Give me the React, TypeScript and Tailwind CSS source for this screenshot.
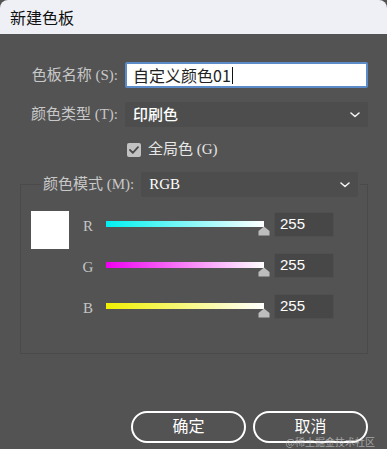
import * as React from "react";

const serif = "font-['Liberation_Serif','Noto_Sans_CJK_SC',serif]";
const sans = "font-['Noto_Sans_CJK_SC','Liberation_Sans',sans-serif]";

const Chevron = () => (
  <svg width="10" height="6" viewBox="0 0 10 6" fill="none">
    <path d="M1 1l4 3.5L9 1" stroke="#f2f2f2" strokeWidth="1.6" strokeLinecap="round" strokeLinejoin="round" />
  </svg>
);

interface SliderRowProps {
  label: string;
  from: string;
  value: number;
}

const SliderRow: React.FC<SliderRowProps> = ({ label, from, value }) => (
  <div className="flex items-center h-[25px]">
    <div className={`w-[12px] text-center text-[15px] text-[#c4c4c4] mt-[4px] ${serif}`}>{label}</div>
    <div className="ml-[12px] w-[158px] relative h-[26px]">
      <div
        className="absolute left-0 right-0 top-[9px] h-[6px]"
        style={{ background: `linear-gradient(to right, ${from}, #ffffff)` }}
      />
      <svg className="absolute right-[-6px] top-[14px]" width="12" height="10" viewBox="0 0 12 10">
        <path d="M6 0.5L11.5 5V9.5H0.5V5Z" fill="#bdbdbd" />
      </svg>
    </div>
    <div className="ml-[10px] w-[60px] h-[25px] bg-[#474747] border border-[#4f4f4f] rounded-[2px] pl-[5px] flex items-center text-[15px] text-white font-['Liberation_Sans',sans-serif]">
      {value}
    </div>
  </div>
);

export default function App() {
  return (
    <div className={`w-[387px] h-[449px] bg-[#535353] flex flex-col relative overflow-hidden ${sans}`}>
      <div className="h-[34px] bg-[#eef0f6] rounded-t-[8px] flex items-center pl-[10px] text-[16px] text-[#111] shrink-0">
        新建色板
      </div>

      <div className="flex flex-col pt-[28px]">
        <div className="flex items-center h-[26px]">
          <div className={`w-[120px] pr-[2px] text-right text-[15px] text-[#c8c8c8] ${serif}`}>色板名称 (S):</div>
          <div className="ml-[5px] w-[243px] h-[26px] bg-white border-2 border-[#5b8bc9] rounded-[2px] flex items-center pl-[6px] text-[16px] text-[#222]">
            自定义颜色01<span className="w-[1px] h-[17px] bg-[#111] ml-[1px]" />
          </div>
        </div>

        <div className="flex items-center h-[25px] mt-[14px]">
          <div className={`w-[120px] pr-[2px] text-right text-[15px] text-[#c8c8c8] ${serif}`}>颜色类型 (T):</div>
          <div className="ml-[5px] w-[243px] h-[25px] bg-[#4d4d4d] rounded-[2px] flex items-center justify-between pl-[8px] pr-[8px] text-[15px] text-white font-medium">
            印刷色
            <Chevron />
          </div>
        </div>

        <div className="flex items-center h-[15px] mt-[15px] ml-[127px]">
          <div className="w-[14px] h-[14px] bg-[#c2c2c2] rounded-[2px] flex items-center justify-center">
            <svg width="10" height="8" viewBox="0 0 10 8" fill="none">
              <path d="M1 4l2.8 2.8L9 1.2" stroke="#4a4a4a" strokeWidth="1.8" strokeLinecap="round" strokeLinejoin="round" />
            </svg>
          </div>
          <span className={`ml-[7px] text-[15px] text-[#e6e6e6] ${serif}`}>全局色 (G)</span>
        </div>

        <fieldset className="mt-[15px] ml-[20px] w-[348px] border border-[#4a4a4a] pl-[10px] pb-[34px]">
          <legend className="ml-[10px] px-[2px]">
            <div className="flex items-center h-[25px]">
              <span className={`text-[15px] text-[#c8c8c8] ${serif}`}>颜色模式 (M):</span>
              <div className={`ml-[7px] w-[217px] h-[25px] bg-[#4d4d4d] rounded-[2px] flex items-center justify-between pl-[8px] pr-[8px] text-[15px] text-white ${serif}`}>
                RGB
                <Chevron />
              </div>
            </div>
          </legend>

          <div className="flex mt-[14px]">
            <div className="w-[38px] h-[38px] bg-white shrink-0" />
            <div className="ml-[13px] flex flex-col gap-[16px] pt-[1px]">
              <SliderRow label="R" from="#00f0f0" value={255} />
              <SliderRow label="G" from="#f000f0" value={255} />
              <SliderRow label="B" from="#f0f000" value={255} />
            </div>
          </div>
        </fieldset>

        <div className="flex justify-end gap-[7px] pr-[19px] mt-[57px]">
          <button className={`w-[115px] h-[32px] rounded-full border-2 border-white text-[16px] text-white ${serif}`}>确定</button>
          <button className={`w-[115px] h-[32px] rounded-full border-2 border-white text-[16px] text-white ${serif}`}>取消</button>
        </div>
      </div>

      <div className="absolute right-[12px] bottom-[1px] text-[10px] leading-[12px] text-[#cfcfcf]/70">@稀土掘金技术社区</div>
    </div>
  );
}
